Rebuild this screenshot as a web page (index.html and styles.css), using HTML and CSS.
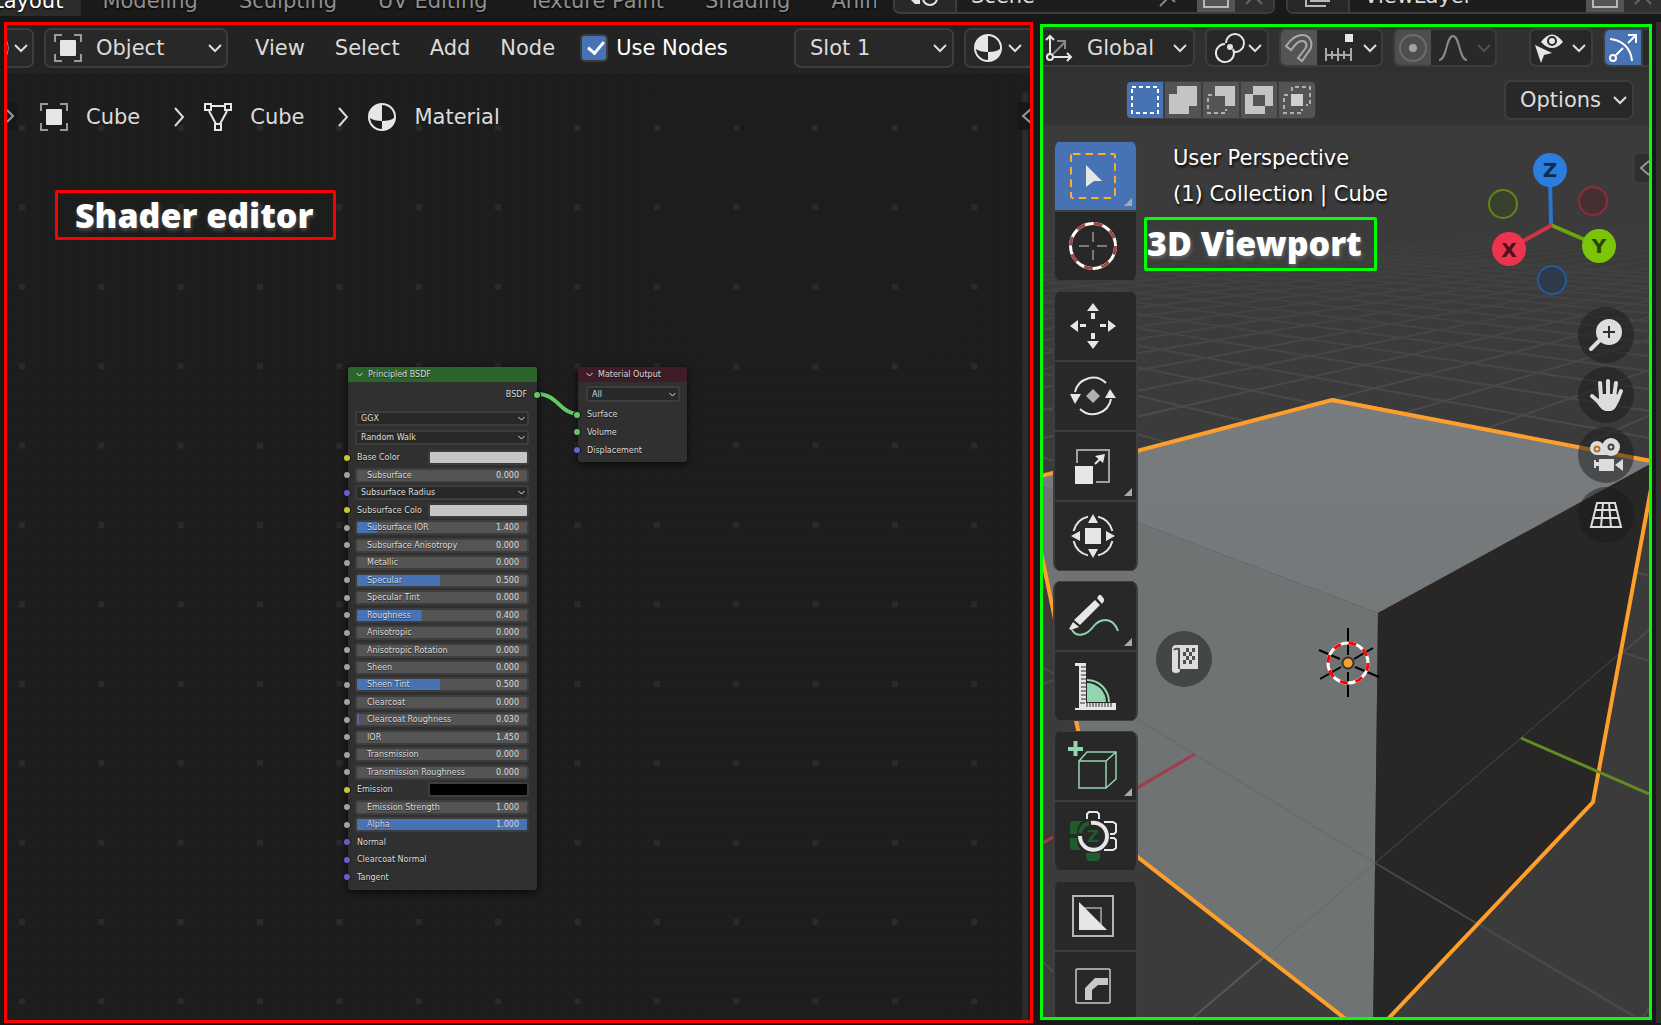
FILE: index.html
```html
<!DOCTYPE html>
<html lang="en">
<head>
<meta charset="utf-8">
<title>Blender</title>
<link rel="stylesheet" href="styles.css">
</head>
<body>
<svg class="defs" aria-hidden="true">
  <symbol id="chev" viewBox="0 0 14 10"><path d="M1 2l6 6 6-6" fill="none" stroke="currentColor" stroke-width="2"/></symbol>
  <symbol id="right" viewBox="0 0 12 20"><path d="M2 1l8 9-8 9" fill="none" stroke="currentColor" stroke-width="2"/></symbol>
  <symbol id="left" viewBox="0 0 12 16"><path d="M10 1L2 8l8 7" fill="none" stroke="currentColor" stroke-width="2"/></symbol>
  <symbol id="object" viewBox="0 0 28 28"><path d="M1 8V1h7M20 1h7v7M27 20v7h-7M8 27H1v-7" fill="none" stroke="#999" stroke-width="2"/><rect x="6" y="6" width="16" height="16" rx="1" fill="#e6e6e6"/></symbol>
  <symbol id="mesh" viewBox="0 0 28 28"><g fill="none" stroke="#e6e6e6" stroke-width="2"><path d="M8 3h12M5 8l7 13M23 8l-7 13"/><path d="M1 1h6v6H1zM21 1h6v6h-6zM11 21h6v6h-6z"/></g></symbol>
  <symbol id="material" viewBox="0 0 28 28"><circle cx="14" cy="14" r="13" fill="none" stroke="#e6e6e6" stroke-width="2"/><path d="M14 1v17C9 18 4 17 1 14A13 13 0 0 1 14 1zM14 27V18c5 0 10-1 13-4A13 13 0 0 1 14 27z" fill="#e6e6e6"/></symbol>
  <symbol id="new" viewBox="0 0 28 28"><path d="M2 2v23h24V2" fill="none" stroke="#b8b8b8" stroke-width="2"/></symbol>
  <symbol id="close" viewBox="0 0 20 20"><path d="M2 2l16 16M18 2L2 18" stroke="#666" stroke-width="2"/></symbol>
</svg>

<header class="topbar">
  <nav class="tabs" aria-label="Workspaces">
    <button class="tab active">Layout</button><button class="tab">Modeling</button><button class="tab">Sculpting</button><button class="tab">UV Editing</button><button class="tab">Texture Paint</button><button class="tab">Shading</button><button class="tab">Animation</button>
  </nav>
  <div class="field scene">
    <button class="kind" aria-label="Browse scene"><svg width="28" height="28" viewBox="0 0 28 28"><path d="M0 18a7 7 0 0 1 9-4v8H4z" fill="#e6e6e6"/><circle cx="19" cy="16" r="7" fill="none" stroke="#e6e6e6" stroke-width="2"/></svg></button>
    <input aria-label="Scene name" value="Scene">
    <button class="plain" aria-label="Pin scene"><svg width="22" height="22" viewBox="0 0 22 22"><path d="M1 21l8-8M6 8l10 9M12 10l8-8" fill="none" stroke="#888" stroke-width="2"/></svg></button>
    <button class="lit" aria-label="New scene"><svg width="28" height="28"><use href="#new"/></svg></button>
    <button class="end" aria-label="Delete scene"><svg width="20" height="20"><use href="#close"/></svg></button>
  </div>
  <div class="field layer">
    <button class="kind" aria-label="Browse view layer"><svg width="28" height="28" viewBox="0 0 28 28"><path d="M2 2v22h20M7 0v19h19M11 0v13h16" fill="none" stroke="#b8b8b8" stroke-width="2"/></svg></button>
    <input aria-label="View layer name" value="ViewLayer">
    <button class="lit" aria-label="New view layer"><svg width="28" height="28"><use href="#new"/></svg></button>
    <button class="end" aria-label="Delete view layer"><svg width="20" height="20"><use href="#close"/></svg></button>
  </div>
</header>

<main class="screen">
  <section class="area shader" aria-label="Shader editor">
    <div class="bar">
      <button class="box cut" aria-label="Editor type"><svg width="4" height="16" viewBox="0 0 4 16"><path d="M0 1q3 7 0 14" fill="none" stroke="#888" stroke-width="1"/></svg><svg class="chev"><use href="#chev"/></svg></button>
      <div class="box pick shading"><svg class="ico"><use href="#object"/></svg><select aria-label="Shader type"><option>Object</option></select><svg class="chev"><use href="#chev"/></svg></div>
      <div class="menus"><button>View</button><button>Select</button><button>Add</button><button>Node</button></div>
      <label class="check"><input type="checkbox" checked>Use Nodes</label>
      <div class="box pick slot"><select aria-label="Material slot"><option>Slot 1</option></select><svg class="chev"><use href="#chev"/></svg></div>
      <button class="box browse" aria-label="Browse material"><svg class="ico"><use href="#material"/></svg><svg class="chev"><use href="#chev"/></svg></button>
    </div>
    <div class="canvas">
      <svg class="dots" width="100%" height="100%" aria-hidden="true">
        <defs>
          <pattern id="small" x="14" y="54" width="15.87" height="15.87" patternUnits="userSpaceOnUse"><rect width="3" height="3" fill="#202020"/></pattern>
          <pattern id="big" x="12" y="52" width="79.35" height="79.4" patternUnits="userSpaceOnUse"><rect width="6" height="6" fill="#2a2a2a"/></pattern>
        </defs>
        <rect width="100%" height="100%" fill="url(#small)"/><rect width="100%" height="100%" fill="url(#big)"/>
        <path d="M531 321C550 321 554 341 571 341" fill="none" stroke="#151515" stroke-width="6"/>
        <path d="M531 321C550 321 554 341 571 341" fill="none" stroke="#63c763" stroke-width="4"/>
      </svg>
      <nav class="crumbs" aria-label="Data path">
        <svg class="ico"><use href="#object"/></svg><a href="#cube">Cube</a><svg class="sep"><use href="#right"/></svg>
        <svg class="ico"><use href="#mesh"/></svg><a href="#mesh-data">Cube</a><svg class="sep"><use href="#right"/></svg>
        <svg class="ico"><use href="#material"/></svg><a href="#mat">Material</a>
      </nav>
      <h1 class="note">Shader editor</h1>
      <button class="flap west" aria-label="Show tools"><svg width="8" height="14" viewBox="0 0 8 14"><path d="M0 1l6 6-6 6" fill="none" stroke="#999" stroke-width="2"/></svg></button>
      <div class="scroll"></div>
      <button class="flap east" aria-label="Show sidebar"><svg width="12" height="16"><use href="#left"/></svg></button>

      <article class="node bsdf">
        <h2><svg class="tiny"><use href="#chev"/></svg>Principled BSDF</h2>
        <p class="out">BSDF<i class="dot green"></i></p>
        <div class="drop"><select aria-label="Distribution"><option>GGX</option></select><svg class="tiny"><use href="#chev"/></svg></div>
        <div class="drop"><select aria-label="Subsurface method"><option>Random Walk</option></select><svg class="tiny"><use href="#chev"/></svg></div>
        <ul>
          <li><i class="dot yellow"></i><label for="base">Base Color</label><button id="base" class="swatch"></button></li>
          <li><i class="dot"></i><label class="num">Subsurface<input value="0.000"></label></li>
          <li><i class="dot blue"></i><div class="drop"><select aria-label="Subsurface Radius"><option>Subsurface Radius</option></select><svg class="tiny"><use href="#chev"/></svg></div></li>
          <li><i class="dot yellow"></i><label for="subc">Subsurface Colo</label><button id="subc" class="swatch"></button></li>
          <li><i class="dot"></i><label class="num" style="--fill:12%">Subsurface IOR<input value="1.400"></label></li>
          <li><i class="dot"></i><label class="num">Subsurface Anisotropy<input value="0.000"></label></li>
          <li><i class="dot"></i><label class="num">Metallic<input value="0.000"></label></li>
          <li><i class="dot"></i><label class="num" style="--fill:49%">Specular<input value="0.500"></label></li>
          <li><i class="dot"></i><label class="num">Specular Tint<input value="0.000"></label></li>
          <li><i class="dot"></i><label class="num" style="--fill:38%">Roughness<input value="0.400"></label></li>
          <li><i class="dot"></i><label class="num">Anisotropic<input value="0.000"></label></li>
          <li><i class="dot"></i><label class="num">Anisotropic Rotation<input value="0.000"></label></li>
          <li><i class="dot"></i><label class="num">Sheen<input value="0.000"></label></li>
          <li><i class="dot"></i><label class="num" style="--fill:49%">Sheen Tint<input value="0.500"></label></li>
          <li><i class="dot"></i><label class="num">Clearcoat<input value="0.000"></label></li>
          <li><i class="dot"></i><label class="num" style="--fill:1%">Clearcoat Roughness<input value="0.030"></label></li>
          <li><i class="dot"></i><label class="num">IOR<input value="1.450"></label></li>
          <li><i class="dot"></i><label class="num">Transmission<input value="0.000"></label></li>
          <li><i class="dot"></i><label class="num">Transmission Roughness<input value="0.000"></label></li>
          <li><i class="dot yellow"></i><label for="emit">Emission</label><button id="emit" class="swatch black"></button></li>
          <li><i class="dot"></i><label class="num">Emission Strength<input value="1.000"></label></li>
          <li><i class="dot"></i><label class="num" style="--fill:100%">Alpha<input value="1.000"></label></li>
          <li><i class="dot blue"></i><span>Normal</span></li>
          <li><i class="dot blue"></i><span>Clearcoat Normal</span></li>
          <li><i class="dot blue"></i><span>Tangent</span></li>
        </ul>
      </article>

      <article class="node output">
        <h2><svg class="tiny"><use href="#chev"/></svg>Material Output</h2>
        <div class="drop"><select aria-label="Target"><option>All</option></select><svg class="tiny"><use href="#chev"/></svg></div>
        <ul>
          <li><i class="dot green"></i><span>Surface</span></li>
          <li><i class="dot green"></i><span>Volume</span></li>
          <li><i class="dot blue"></i><span>Displacement</span></li>
        </ul>
      </article>
    </div>
  </section>

  <section class="area view" aria-label="3D Viewport">
    <svg class="world" viewBox="1043 27 606 990" preserveAspectRatio="xMinYMin slice" aria-hidden="true">
      <defs>
        <linearGradient id="fade" gradientUnits="userSpaceOnUse" x1="0" y1="215" x2="0" y2="420"><stop offset="0" stop-color="#fff" stop-opacity="0"/><stop offset=".3" stop-color="#fff" stop-opacity=".4"/><stop offset="1" stop-color="#fff"/></linearGradient>
        <mask id="floor" maskUnits="userSpaceOnUse" x="1040" y="180" width="640" height="860"><rect x="1040" y="180" width="640" height="860" fill="url(#fade)"/></mask>
        <linearGradient id="topface" x1="0" y1="0" x2="0" y2="1"><stop offset="0" stop-color="#787c7f"/><stop offset="1" stop-color="#747879"/></linearGradient>
      </defs>
      <rect x="1043" y="27" width="700" height="1100" fill="#3b3b3b"/>
      <g mask="url(#floor)" fill="none" stroke="#4b4b4b" stroke-width="2">
        <path d="M213 178L1636 1017M213 178L1101 1017M213 178L2706 1017M213 178L3241 1017M213 178L3776 1017M213 178L4311 1017M213 178L4846 1017M213 178L5381 1017M213 178L5916 1017M213 178L6451 1017M213 178L6986 1017M213 178L7521 1017M213 178L8056 1017M213 178L8591 1017M213 178L9126 1017M213 178L9661 1017M213 178L10196 1017M213 178L10731 1017M213 178L11266 1017M213 178L11801 1017M213 178L12336 1017M213 178L12871 1017"/>
        <path d="M2180 180L1643 1017M2180 180L1193 1017M2180 180L293 1017M2180 180L-157 1017M2180 180L-607 1017M2180 180L-1057 1017M2180 180L-1507 1017M2180 180L-1957 1017M2180 180L-2407 1017M2180 180L-2857 1017M2180 180L-3307 1017M2180 180L-3757 1017M2180 180L-4207 1017M2180 180L-4657 1017M2180 180L-5107 1017M2180 180L-5557 1017M2180 180L-6007 1017M2180 180L-6457 1017M2180 180L-6907 1017M2180 180L-7357 1017M2180 180L-7807 1017"/>
      </g>
      <path d="M1332 398L1656 461 1378 613 1026 480z" fill="url(#topface)"/>
      <path d="M1026 480L1378 613 1373 1040 1098 825z" fill="#6f7373"/>
      <path d="M1378 613L1656 461 1593 801 1373 1037z" fill="#292626"/>
      <path d="M1138 720L1375 863 1185 1025" fill="none" stroke="#656767" stroke-width="1"/>
      <path d="M1375 863L1521 738 1620 653" fill="none" stroke="#4c4a4a" stroke-width="1"/>
      <path d="M1375 863L1631 1015" fill="none" stroke="#4a4848" stroke-width="2"/>
      <path d="M1332 400L1656 462 1593 802 1370 1038 1098 826 1026 480z" fill="none" stroke="#ff9f2b" stroke-width="4"/>
      <path d="M1043 843L1195 754" stroke="#a23c4b" stroke-width="3"/>
      <path d="M1521 738L1649 794" stroke="#638b23" stroke-width="3"/>
      <path d="M1348 628v27M1348 672v25M1319 650l21 9M1355 667l24 10M1320 679l21-12M1354 659l19-11" stroke="#000" stroke-width="2"/>
      <circle cx="1348" cy="663" r="20" fill="none" stroke="#fff" stroke-width="3"/>
      <circle cx="1348" cy="663" r="20" fill="none" stroke="#f00" stroke-width="3" stroke-dasharray="7.85"/>
      <circle cx="1348" cy="663" r="5.500" fill="#ff9f2b" stroke="#333" stroke-width="2"/>
    </svg>
    <div class="bar tight">
      <div class="box pick orient"><svg class="ico" viewBox="0 0 28 28"><path d="M8 20L20 8M12 7h8v8" fill="none" stroke="#888" stroke-width="2"/><path d="M5 20V2M1 6l4-4 4 4M8 23h18M22 19l4 4-4 4" fill="none" stroke="#e6e6e6" stroke-width="2"/><circle cx="5" cy="23" r="3" fill="none" stroke="#e6e6e6" stroke-width="2"/></svg><select aria-label="Transform orientation"><option>Global</option></select><svg class="chev"><use href="#chev"/></svg></div>
      <button class="box pair" aria-label="Pivot point"><svg class="ico" viewBox="0 0 28 28"><circle cx="15" cy="13" r="3" fill="#e6e6e6"/><path d="M11 9A9 9 0 1 1 19 18M18 15A9 9 0 1 1 10 10" fill="none" stroke="#e6e6e6" stroke-width="2"/></svg><svg class="chev"><use href="#chev"/></svg></button>
      <div class="box duo"><button class="lit" aria-label="Snap"><svg class="ico" viewBox="0 0 28 28"><path d="M1 12C6 5 11 1 17 1c9 0 12 10 7 16l-7 10-4-3 7-9c3-4 1-8-3-8-4 0-6 3-11 9z" fill="none" stroke="#aaa" stroke-width="2"/></svg></button><button class="rest" aria-label="Snap to"><svg class="ico" viewBox="0 0 28 28"><path d="M1 14v13M1 21h25M26 14v13M7 17v8M13 14v13M19 17v8" stroke="#aaa" stroke-width="2"/><path d="M20 0h8v8h-8z" fill="#e6e6e6"/></svg><svg class="chev"><use href="#chev"/></svg></button></div>
      <div class="box duo dim"><button class="lit" aria-label="Proportional editing"><svg class="ico" viewBox="0 0 28 28"><circle cx="14" cy="14" r="13" fill="none" stroke="#777" stroke-width="2"/><circle cx="14" cy="14" r="4" fill="#b8b8b8"/></svg></button><button class="rest" aria-label="Falloff"><svg class="ico" viewBox="0 0 28 28"><path d="M0 26c8 0 7-24 14-24s6 24 14 24" fill="none" stroke="#999" stroke-width="2"/></svg><svg class="chev"><use href="#chev"/></svg></button></div>
      <button class="box pair seen" aria-label="Object types visibility"><svg class="ico" viewBox="0 0 28 28"><path d="M6 8q11-15 22 0-11 12-22 0z" fill="#e6e6e6"/><circle cx="17" cy="7" r="4" fill="#e6e6e6" stroke="#282828" stroke-width="2"/><path d="M0 11l17 8-8 2-3 8z" fill="#e6e6e6"/></svg><svg class="chev"><use href="#chev"/></svg></button>
      <button class="box gizmo-on" aria-label="Show gizmo"><svg class="ico" viewBox="0 0 28 28"><g fill="none" stroke="#fff" stroke-width="2"><circle cx="4" cy="24" r="3"/><path d="M7 21l7-7M19 9l8-8M19 1h8v8M1 5c12 1 21 9 22 22"/></g></svg></button>
    </div>
    <div class="bar modes-row">
      <div class="modes">
        <button class="on" aria-label="Set"><svg class="ico" viewBox="0 0 28 28"><rect x="1" y="1" width="26" height="26" fill="none" stroke="#fff" stroke-width="2" stroke-dasharray="4 3"/></svg></button>
        <button aria-label="Extend"><svg class="ico" viewBox="0 0 28 28"><path d="M8 0h20v20h-8v8H0V8h8z" fill="#c4c4c4"/></svg></button>
        <button aria-label="Subtract"><svg class="ico" viewBox="0 0 28 28"><path d="M8 0h20v20h-10V10H8z" fill="#c4c4c4"/><path d="M5 9H1v18h18v-4" fill="none" stroke="#b0b0b0" stroke-width="2" stroke-dasharray="4 3"/></svg></button>
        <button aria-label="Invert"><svg class="ico" viewBox="0 0 28 28"><path fill-rule="evenodd" d="M8 0h20v20h-8v8H0V8h8zM8 9v11h12V9z" fill="#c4c4c4"/></svg></button>
        <button aria-label="Intersect"><svg class="ico" viewBox="0 0 28 28"><path d="M8 8h12v12H8z" fill="#d0d0d0"/><path d="M9 5V1h18v18h-4M5 9H1v18h18v-4" fill="none" stroke="#b0b0b0" stroke-width="2" stroke-dasharray="4 3"/></svg></button>
      </div>
      <button class="box options">Options<svg class="chev"><use href="#chev"/></svg></button>
    </div>

    <div class="stage">
      <div class="tools">
        <div class="group">
          <button class="on more" aria-label="Select box"><svg viewBox="0 0 48 48"><rect x="2" y="2" width="44" height="44" rx="2" fill="none" stroke="#ffae2b" stroke-width="2" stroke-dasharray="7.5 5"/><path d="M17 13l16 16h-8l-8 6z" fill="#e6e6e6"/></svg></button>
          <button aria-label="Cursor"><svg viewBox="0 0 48 48"><circle cx="24" cy="24" r="22.5" fill="none" stroke="#fff" stroke-width="3"/><circle cx="24" cy="24" r="22.5" fill="none" stroke="#a14444" stroke-width="3" stroke-dasharray="8.84"/><path d="M24 10v10M24 28v10M10 24h10M28 24h10" stroke="#ccc" stroke-width="1"/></svg></button>
        </div>
        <div class="group">
          <button aria-label="Move"><svg viewBox="0 0 48 48"><path d="M24 1l6 8H18zM24 47l6-8H18zM1 24l8-6v12zM47 24l-8-6v12zM22 11h4v6h-4zM22 31h4v6h-4zM11 22h6v3h-6zM31 22h6v3h-6z" fill="#e6e6e6"/></svg></button>
          <button aria-label="Rotate"><svg viewBox="0 0 48 48"><path d="M6 20A18.500 18.500 0 0 1 37 11M42 27A18.500 18.500 0 0 1 11 37" fill="none" stroke="#e6e6e6" stroke-width="2"/><path d="M1 22h11l-6 10zM41 17l6 9H36z" fill="#e6e6e6"/><path d="M24 17l7 7-7 7-7-7z" fill="#b0b0b0"/></svg></button>
          <button class="more" aria-label="Scale"><svg viewBox="0 0 48 48"><path d="M8 21V8h32v32H27" fill="none" stroke="#a0a0a0" stroke-width="2"/><path d="M6 24h18v18H6z" fill="#e6e6e6"/><path d="M26 22l7-7" stroke="#e6e6e6" stroke-width="2"/><path d="M36 12l-10 2 8 7z" fill="#e6e6e6"/></svg></button>
          <button aria-label="Transform"><svg viewBox="0 0 48 48"><path d="M29 4.600A20 20 0 0 1 43.400 19M43.400 29A20 20 0 0 1 29 43.400M19 43.400A20 20 0 0 1 4.600 29M4.600 19A20 20 0 0 1 19 4.600" fill="none" stroke="#e6e6e6" stroke-width="2"/><path d="M16 16h16v16H16zM24 2l5 9H19zM24 46l5-9H19zM2 24l9-5v10zM46 24l-9-5v10z" fill="#e6e6e6"/></svg></button>
        </div>
        <div class="group">
          <button class="more" aria-label="Annotate"><svg viewBox="0 0 48 48"><path d="M5 28L26 8l5 5-20 20zM28 6l2-3h2l3 4v2l-2 3zM4 30l6 5-8 3-2-1z" fill="#e6e6e6"/><path d="M3 38C8 46 18 43 24 35S43 23 49 39" fill="none" stroke="#92d6af" stroke-width="2"/></svg></button>
          <button aria-label="Measure"><svg viewBox="0 0 48 48"><path d="M6 1h11v40h30v7H6v-2h4V4H6z" fill="#e6e6e6"/><path d="M18 40V21a19 19 0 0 1 19 19z" fill="#92d6af"/><path d="M18 18a22 22 0 0 1 22 22" fill="none" stroke="#92d6af" stroke-width="2"/><path d="M12 5h5M12 9h5M12 13h5M12 17h5M12 21h5M12 25h5M12 29h5M12 33h5M12 37h5M11 41h5M18 41v4M21 41v4M24 41v4M27 41v4M30 41v4M33 41v4M36 41v4M39 41v4M42 41v4" stroke="#282828" stroke-width="1"/></svg></button>
        </div>
        <div class="group">
          <button class="more" aria-label="Add cube"><svg viewBox="0 0 48 48"><path d="M-1 7h15M6.500 -1v15" stroke="#92d6af" stroke-width="4"/><path d="M10 19h27v27H10zM10 19l8-9h29v27l-10 9M37 19l10-9" fill="none" stroke="#92d6af" stroke-width="1.500"/></svg></button>
          <button aria-label="Auto mirror"><svg viewBox="0 0 48 48"><path d="M3 9h10q-5 4-5 13H1V11zM1 26h7q0 8 4 12H3l-2-2zM17 41h14v5l-2 3H19l-2-3z" fill="#1f5c2c"/><path d="M18 7V2l2-2h8l2 2v5M35 10h9l3 2v8l-2 2h-4M41 26h4l2 2v8l-3 2h-9" fill="none" stroke="#e6e6e6" stroke-width="2"/><path d="M22 11A13.500 13.500 0 1 1 11 24" fill="none" stroke="#e6e6e6" stroke-width="4"/><path d="M11 21A13 13 0 0 1 20 11" fill="none" stroke="#1f5c2c" stroke-width="4"/><text x="24" y="30" text-anchor="middle" class="zed">Z</text></svg></button>
        </div>
        <div class="group">
          <button aria-label="Shear"><svg viewBox="0 0 48 48"><rect x="4" y="4" width="40" height="40" fill="none" stroke="#b4b4b4" stroke-width="2"/><path d="M16 16h16v16H16z" fill="none" stroke="#888" stroke-width="2"/><path d="M10 10v28h28z" fill="#e6e6e6"/></svg></button>
          <button aria-label="Bevel"><svg viewBox="0 0 48 48"><rect x="7" y="7" width="34" height="34" rx="1" fill="none" stroke="#c8c8c8" stroke-width="1.500"/><path d="M16 38V26l10-10h13v7H29l-6 5v10z" fill="#c8c8c8"/></svg></button>
        </div>
      </div>
      <div class="info">
        <p>User Perspective</p>
        <p>(1) Collection | Cube</p>
        <h1 class="note">3D Viewport</h1>
      </div>
      <div class="nav">
        <svg class="axes" width="130" height="150" viewBox="1487 152 130 150" role="img" aria-label="View axes">
          <path d="M1551 225l-1-50" stroke="#2c75cf" stroke-width="4"/><path d="M1551 225l48 21" stroke="#6ca50e" stroke-width="4"/><path d="M1552 225l-43 24" stroke="#cc3448" stroke-width="4"/>
          <circle cx="1503" cy="204" r="14" fill="#3a402f" stroke="#5e8a12" stroke-width="2"/><circle cx="1593" cy="201" r="14" fill="#443033" stroke="#932a3a" stroke-width="2"/><circle cx="1552" cy="280" r="14" fill="#2f3a4a" stroke="#235b9f" stroke-width="2"/>
          <circle cx="1550" cy="170" r="17" fill="#2b7de0"/><circle cx="1509" cy="249" r="17" fill="#ec344e"/><circle cx="1599" cy="246" r="17" fill="#7bc407"/>
          <g class="axis"><text x="1550" y="177" fill="#0f2c50">Z</text><text x="1509" y="257" fill="#4d1019">X</text><text x="1599" y="253" fill="#2a4403">Y</text></g>
        </svg>
        <button class="round" aria-label="Zoom"><svg viewBox="0 0 36 36"><circle cx="21" cy="15" r="13" fill="#ddd"/><path d="M12 23l-9 9" stroke="#ddd" stroke-width="4" stroke-linecap="round"/><path d="M21 9v12M15 15h12" stroke="#2c2c2c" stroke-width="2"/></svg></button>
        <button class="round" aria-label="Pan"><svg viewBox="0 0 36 36"><g stroke="#ddd" stroke-width="4" stroke-linecap="round" fill="none"><path d="M13 20L12 6M20 19V4M26 20l2-14M29 24l4-10M11 25l-7-6"/></g><path d="M11 17h18l2 6q-3 10-8 11h-5q-5-1-9-8l-4-5 6 1z" fill="#ddd"/></svg></button>
        <button class="round" aria-label="Camera"><svg viewBox="0 0 36 36"><g fill="#ddd"><circle cx="9" cy="11" r="7"/><circle cx="23" cy="10" r="9"/><path d="M9 13h16v5H9zM11 22h15v12H11zM27 28l8-6v12zM7 25h4v4H7zM6 23h2v8H6z"/></g><g fill="#ddd" stroke="#444" stroke-width="2"><circle cx="9" cy="12" r="2.500" stroke="#b8702a"/><circle cx="23" cy="10" r="2.500"/></g></svg></button>
        <button class="round" aria-label="Perspective"><svg viewBox="0 0 36 36"><path d="M9 6h18l6 24H3zM7 13h22M5 21h26M15 6l-2 24M21 6l2 24" fill="none" stroke="#ddd" stroke-width="2"/></svg></button>
      </div>
      <button class="flap side" aria-label="Show sidebar"><svg width="12" height="16"><use href="#left"/></svg></button>
      <button class="round uv" aria-label="Texture"><svg viewBox="0 0 36 36"><path d="M7 4h25v24H14v1q0 3-4 3t-4-3V8q0-3 3-4z" fill="#ddd"/><path d="M8 9q1-2 5-1v20" fill="none" stroke="#4b4f4f" stroke-width="2"/><path d="M20 7h3v4h-3zM26 7h3v4h-3zM17 11h3v4h-3zM23 11h3v4h-3zM20 15h3v4h-3zM26 15h3v4h-3zM17 19h3v4h-3zM23 19h3v4h-3z" fill="#4b4f4f"/></svg></button>
    </div>
  </section>
  <aside class="edge"></aside>
</main>
</body>
</html>
```
FILE: styles.css
```css
* { box-sizing: border-box; }
body {
  margin: 0;
  height: 100vh;
  display: flex;
  flex-direction: column;
  background: #181818;
  color: #dcdcdc;
  font: 21px/28px "DejaVu Sans", sans-serif;
  overflow: hidden;
}
h1, h2, p, ul { margin: 0; padding: 0; font-weight: normal; }
ul { list-style: none; }
button, input, select { font: inherit; color: inherit; border: 0; padding: 0; margin: 0; background: none; }
select { appearance: none; outline: 0; }
a { color: inherit; text-decoration: none; }
svg { display: block; flex: none; }
.defs { position: absolute; width: 0; height: 0; }

.topbar { flex: none; height: 16px; display: flex; align-items: flex-end; overflow: hidden; background: #1a1a1a; }
.tabs { flex: 1; min-width: 0; height: 34px; display: flex; gap: 1px; margin-left: -28px; overflow: hidden; }
.tab { flex: none; height: 34px; padding: 4px 20px 0; color: #8f8f8f; text-shadow: 0 1px 2px #000; }
.tab.active { padding-right: 18px; background: #2c2c2c; color: #fff; }
.field { flex: none; display: flex; height: 40px; margin-bottom: 2px; padding-top: 4px; border: 2px solid #3d3d3d; border-radius: 7px; background: #1d1d1d; overflow: hidden; }
.field button { display: flex; align-items: center; justify-content: center; }
.field input { flex: 1; min-width: 0; padding-left: 14px; }
.scene { width: 382px; margin-left: 17px; }
.layer { width: 376px; margin-left: 11px; margin-right: -1px; border-right: 0; border-radius: 7px 0 0 7px; }
.kind { width: 62px; border-right: 2px solid #3d3d3d; background: #282828; }
.plain { width: 54px; }
.field .lit { width: 38px; background: #545454; }
.end { width: 38px; background: #303030; }

.screen { flex: 1; min-height: 0; display: grid; grid-template-columns: 1036fr 616fr 5px; grid-template-rows: minmax(0, 1fr); padding: 6px 0 2px 4px; }
.area { position: relative; display: flex; flex-direction: column; min-width: 0; border: 3px solid; overflow: hidden; }
.shader { margin-right: 7px; border-color: #f00; background: #1d1d1d; }
.view { margin: 2px 4px 3px 0; border-color: #0f0; }
.edge { background: #303030; }

.bar { flex: none; display: flex; align-items: center; gap: 10px; height: 48px; padding-bottom: 2px; background: #232323; }
.box { flex: none; display: flex; align-items: center; height: 40px; border: 2px solid #3d3d3d; border-radius: 7px; background: #282828; overflow: hidden; }
.ico { width: 28px; height: 28px; overflow: visible; }
.chev { width: 14px; height: 10px; color: #dcdcdc; }
.pick select { flex: 1; min-width: 0; }
.cut { width: 27px; border-left: 0; border-radius: 0 7px 7px 0; gap: 3px; }
.shading { width: 184px; padding: 0 4px 0 8px; gap: 14px; }
.menus { display: flex; margin-left: 2px; }
.menus button { padding: 0 15px; }
.check { display: flex; align-items: center; gap: 8px; color: #fff; }
.check input { appearance: none; width: 28px; height: 28px; border: 2px solid #3d3d3d; border-radius: 5px; background: #4772b3; }
.check input::after { content: ""; display: block; width: 7px; height: 13px; margin: 2px 0 0 9px; border: solid #fff; border-width: 0 3px 3px 0; transform: rotate(40deg); }
.slot { width: 160px; margin-left: auto; padding: 0 5px 0 14px; }
.browse { width: 66px; padding-left: 8px; gap: 6px; border-right: 0; border-radius: 7px 0 0 7px; }

.canvas { position: relative; flex: 1; }
.dots { position: absolute; inset: 0; }
.crumbs { position: relative; display: flex; align-items: center; padding: 30px 0 0 33px; }
.crumbs a { margin: 0 33px 0 18px; }
.crumbs .sep { width: 12px; height: 20px; margin-right: 19px; }
.note { width: max-content; border: 3px solid #f00; color: #fff; font: 900 34px/44px "Noto Sans", sans-serif; text-shadow: 1px 2px 4px rgba(255, 255, 255, .25); border-radius: 2px; }
.shader .note { position: relative; margin: 59px 0 0 48px; padding: 0 20px 0 17px; }
.flap { position: absolute; display: flex; align-items: center; height: 28px; background: #181818; border-radius: 4px; color: #999; overflow: hidden; }
.west { left: 0; top: 29px; width: 10px; }
.east { right: 0; top: 29px; width: 13px; padding-left: 4px; }
.scroll { position: absolute; right: 2px; top: 19px; bottom: 0; width: 6px; border-radius: 3px 3px 0 0; background: #2b2b2b; }

.node { position: absolute; top: 294px; background: #303030; border-radius: 3px; box-shadow: 0 2px 7px 1px rgba(0, 0, 0, .6); font-size: 8px; line-height: 11px; color: #dcdcdc; text-shadow: 0 1px 1px rgba(0, 0, 0, .6); }
.bsdf { left: 341px; width: 189px; padding-bottom: 4px; }
.output { left: 571px; width: 109px; padding-bottom: 3px; }
.node h2 { display: flex; align-items: center; gap: 5px; height: 15px; padding-left: 8px; font-size: 8px; line-height: 11px; border-radius: 3px 3px 0 0; }
.bsdf h2 { background: #2b652b; }
.output h2 { background: #3e1d26; }
.tiny { width: 7px; height: 5px; color: #dcdcdc; }
.out { position: relative; height: 25px; line-height: 26px; margin-bottom: 4px; padding-right: 10px; text-align: right; }
.dot { position: absolute; left: -4px; top: calc(50% - 3px); width: 6px; height: 6px; border-radius: 50%; background: #a1a1a1; box-shadow: 0 0 0 1px #1a1a1a; }
.out .dot { left: auto; right: -3px; }
.green { background: #63c763; }
.yellow { background: #c7c729; }
.blue { background: #6363c7; }
.drop { display: flex; align-items: center; height: 15px; margin: 0 8px 4px 7px; padding: 0 2px 0 4px; border: 2px solid #3d3d3d; border-radius: 3px; background: #282828; }
.drop select { flex: 1; min-width: 0; height: 11px; }
.node ul { display: grid; grid-auto-rows: 1fr; }
.bsdf ul { height: 437px; }
.node li { position: relative; display: flex; align-items: center; justify-content: space-between; padding: 0 8px 0 9px; }
.bsdf li .drop, .num { flex: 1; margin: 0 0 0 -2px; }
.swatch { width: 101px; height: 15px; border: 2px solid #3d3d3d; border-radius: 3px; background: #c6c6c6; }
.black { background: #000; }
.num { display: flex; align-items: center; justify-content: space-between; height: 15px; padding: 0 8px 0 10px; border: 2px solid #3d3d3d; border-radius: 3px; background: linear-gradient(#4772b3, #4772b3) 0 0 / var(--fill, 0%) 100% no-repeat #545454; white-space: nowrap; }
.num input { width: 30px; height: 11px; text-align: right; }
.output .drop { height: 16px; margin: 4px 7px 4px 8px; }
.output ul { height: 53px; }

.world { position: absolute; inset: 0; width: 100%; height: 100%; }
.tight { position: relative; background: #303030; align-items: flex-start; height: 46px; padding-top: 1px; }
.orient { width: 152px; height: 39px; padding: 0 6px 0 2px; gap: 14px; border-left: 0; border-radius: 0 7px 7px 0; }
.pair { width: 64px; height: 39px; padding-left: 8px; gap: 5px; }
.duo { width: 104px; height: 39px; }
.duo .lit { display: flex; align-items: center; justify-content: center; width: 36px; height: 36px; background: #545454; }
.rest { display: flex; align-items: center; gap: 10px; padding-left: 8px; }
.dim { opacity: .85; }
.dim .chev { color: #555; }
.seen { margin-left: auto; padding-left: 4px; gap: 9px; }
.gizmo-on { width: 46px; height: 39px; padding-left: 4px; border-right: 0; border-radius: 7px 0 0 7px; background: linear-gradient(90deg, #4772b3 36px, #3d3d3d 36px, #3d3d3d 38px, #282828 38px); }
.modes-row { position: relative; height: 52px; padding: 2px 15px 0 83px; background: #333; justify-content: space-between; }
.modes { display: flex; gap: 2px; padding: 1px; border-radius: 7px; background: #3d3d3d; overflow: hidden; }
.modes button { width: 36px; height: 36px; padding: 4px; background: #545454; }
.modes .on { background: #4772b3; }
.options { width: 130px; padding: 0 5px 0 14px; justify-content: space-between; }

.stage { position: relative; flex: 1; min-height: 0; display: flex; padding: 16px 15px 0 10px; }
.tools { flex: none; display: flex; flex-direction: column; gap: 10px; width: 85px; }
.group { flex: none; border: 1px solid #3d3d3d; border-width: 0 2px; border-radius: 8px; background: #3d3d3d; overflow: hidden; }
.group button { position: relative; display: flex; align-items: center; justify-content: center; width: 81px; height: 70px; padding-right: 5px; background: #282828; border: 1px solid #3d3d3d; border-width: 1px 0; }
.group svg { width: 48px; height: 48px; overflow: visible; }
.group .on { background: #4772b3; }
.more::after { content: ""; position: absolute; right: 4px; bottom: 4px; border: 4px solid; border-color: transparent #aaa #aaa transparent; }
.zed { font: bold 16px "DejaVu Sans", sans-serif; fill: #1f5c2c; }
.info { padding: 0 0 0 6px; color: #fff; text-shadow: 1px 2px 3px #000; }
.info p { padding-left: 29px; line-height: 36px; }
.info p:first-child { margin-top: -1px; }
.view .note { margin-top: 5px; padding: 0 12px 0 0; line-height: 46px; padding-bottom: 2px; border-color: #0f0; }
.nav { display: flex; flex-direction: column; align-items: flex-end; gap: 4px; margin-left: auto; padding-top: 11px; }
.axes { margin-bottom: 1px; margin-right: 17px; }
.axis { font: bold 20px "DejaVu Sans", sans-serif; text-anchor: middle; }
.round { flex: none; display: flex; align-items: center; justify-content: center; width: 56px; height: 56px; border-radius: 50%; background: rgba(25, 25, 25, .5); }
.round svg { width: 36px; height: 36px; }
.side { right: 0; top: 29px; width: 14px; padding-left: 4px; background: #2e2e2e; }
.uv { position: absolute; left: 113px; top: 506px; }
```
